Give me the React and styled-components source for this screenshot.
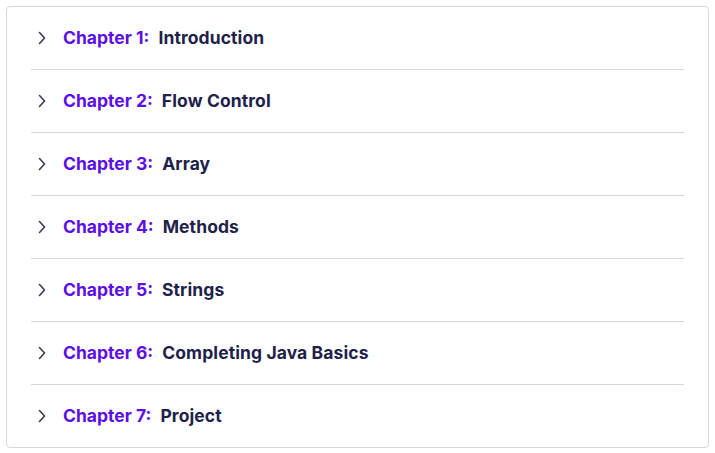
import styled, { createGlobalStyle } from "styled-components";

const GlobalStyle = createGlobalStyle`
  body {
    margin: 0;
    background: #ffffff;
    font-family: Inter, "Noto Sans", sans-serif;
  }
`;

const Page = styled.div`
  padding: 6px;
`;

const Card = styled.div`
  width: 703px;
  box-sizing: border-box;
  border: 1px solid #d3d9e2;
  border-radius: 4px;
  padding: 0 24px;
  background: #ffffff;
`;

// 61px + 1px bottom padding + 1px divider = 63px pitch
const Row = styled.div`
  height: 61px;
  display: flex;
  align-items: center;
  border-bottom: ${(p) => (p.$last ? "none" : "1px solid #cfd8e3")};
  padding: 0 0 1px 6px;
  cursor: pointer;
`;

const Chevron = styled.svg`
  width: 10px;
  height: 14px;
  flex: 0 0 auto;
  margin-right: 16px;
`;

const Label = styled.span`
  font-size: 17.5px;
  font-weight: 700;
  line-height: 22px;
  color: #5c0fe6;
`;

const Title = styled.span`
  font-size: 17.5px;
  font-weight: 700;
  line-height: 22px;
  color: #221f4a;
  margin-left: 9px;
  letter-spacing: 0.1px;
`;

const chapters = [
  "Introduction",
  "Flow Control",
  "Array",
  "Methods",
  "Strings",
  "Completing Java Basics",
  "Project",
];

export default function App() {
  return (
    <>
      <GlobalStyle />
      <Page>
        <Card>
          {chapters.map((title, i) => (
            <Row key={title} $last={i === chapters.length - 1}>
              <Chevron viewBox="0 0 10 14">
                <path
                  d="M2.5 1.5 L7.5 7 L2.5 12.5"
                  fill="none"
                  stroke="#3c3a5c"
                  strokeWidth="1.6"
                  strokeLinecap="round"
                  strokeLinejoin="round"
                />
              </Chevron>
              <Label>Chapter {i + 1}:</Label>
              <Title>{title}</Title>
            </Row>
          ))}
        </Card>
      </Page>
    </>
  );
}
